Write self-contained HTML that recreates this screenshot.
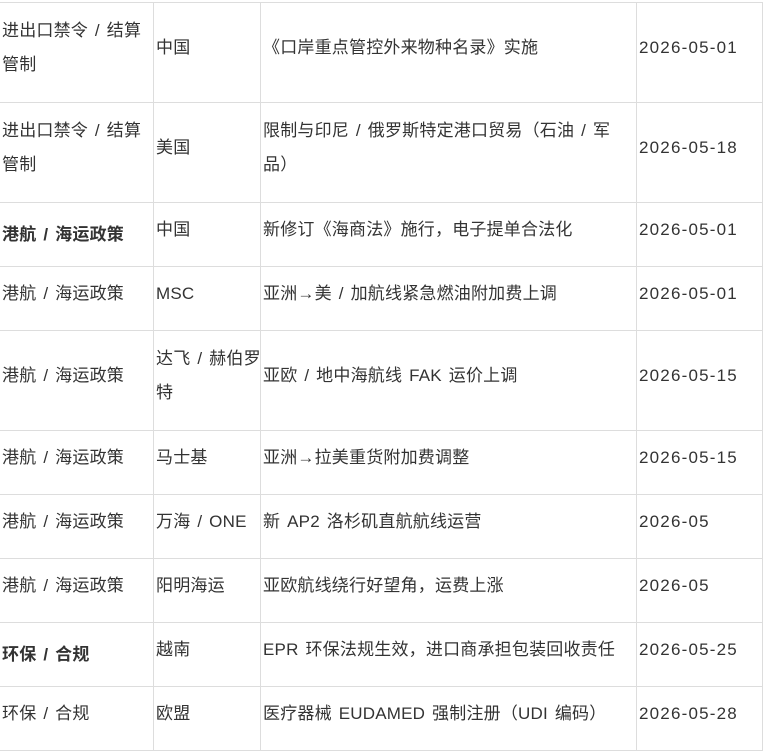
<!DOCTYPE html>
<html><head><meta charset="utf-8"><style>
body{margin:0;background:#fff;overflow:hidden;width:765px;height:731px;position:relative}
table{position:absolute;left:-1px;top:2px;width:763px;border-collapse:collapse;table-layout:fixed;font-family:"Liberation Sans","Noto Sans CJK SC",sans-serif;font-size:17px;letter-spacing:0.2px;word-spacing:2px;color:#333}
td{border:1px solid #ddd;padding:0 0 9px 2px;vertical-align:middle;line-height:34px;overflow:hidden;box-sizing:border-box;white-space:nowrap}
td.b{font-weight:bold;padding-bottom:0}
td:nth-child(4){letter-spacing:1.2px}
</style></head><body>
<table>
<colgroup><col style="width:154px"><col style="width:107px"><col style="width:376px"><col style="width:126px"></colgroup>
<tr style="height:100px"><td>进出口禁令 / 结算<br>管制</td><td>中国</td><td>《口岸重点管控外来物种名录》实施</td><td>2026-05-01</td></tr>
<tr style="height:100px"><td>进出口禁令 / 结算<br>管制</td><td>美国</td><td>限制与印尼 / 俄罗斯特定港口贸易（石油 / 军<br>品）</td><td>2026-05-18</td></tr>
<tr style="height:64px"><td class="b">港航 / 海运政策</td><td>中国</td><td>新修订《海商法》施行，电子提单合法化</td><td>2026-05-01</td></tr>
<tr style="height:64px"><td>港航 / 海运政策</td><td>MSC</td><td>亚洲→美 / 加航线紧急燃油附加费上调</td><td>2026-05-01</td></tr>
<tr style="height:100px"><td>港航 / 海运政策</td><td>达飞 / 赫伯罗<br>特</td><td>亚欧 / 地中海航线 FAK 运价上调</td><td>2026-05-15</td></tr>
<tr style="height:64px"><td>港航 / 海运政策</td><td>马士基</td><td>亚洲→拉美重货附加费调整</td><td>2026-05-15</td></tr>
<tr style="height:64px"><td>港航 / 海运政策</td><td>万海 / ONE</td><td>新 AP2 洛杉矶直航航线运营</td><td>2026-05</td></tr>
<tr style="height:64px"><td>港航 / 海运政策</td><td>阳明海运</td><td>亚欧航线绕行好望角，运费上涨</td><td>2026-05</td></tr>
<tr style="height:64px"><td class="b">环保 / 合规</td><td>越南</td><td>EPR 环保法规生效，进口商承担包装回收责任</td><td>2026-05-25</td></tr>
<tr style="height:64px"><td>环保 / 合规</td><td>欧盟</td><td>医疗器械 EUDAMED 强制注册（UDI 编码）</td><td>2026-05-28</td></tr>
</table>
</body></html>
